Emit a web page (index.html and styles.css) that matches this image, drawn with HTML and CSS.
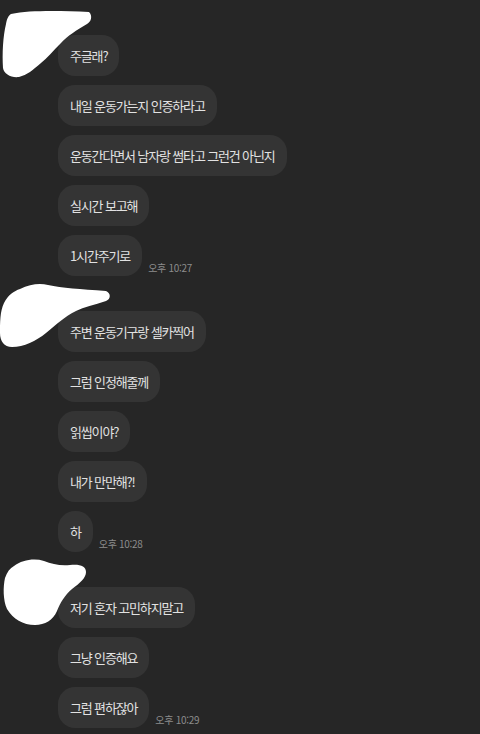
FILE: index.html
```html
<!DOCTYPE html>
<html lang="ko">
<head>
    <meta charset="UTF-8">
    <meta name="viewport" content="width=device-width, initial-scale=1.0">
    <title>채팅</title>
    <link rel="stylesheet" href="styles.css">
</head>
<body>
    <div class="chat">
        <div class="group first">
            <svg class="blot" width="100" height="80" viewBox="0 0 100 80">
                <path d="M10 8 C30 4 60 5 88 6 C92 10 90 16 86 18 C76 24 66 30 60 37 C52 45 46 52 40 57 C32 64 26 69 18 71 C10 72 3 68 2 62 C1 48 2 30 5 18 C6 12 8 9 10 8 Z" fill="#fff"/>
            </svg>
            <div class="row"><div class="bubble">주글래?</div></div>
            <div class="row"><div class="bubble">내일 운동가는지 인증하라고</div></div>
            <div class="row"><div class="bubble">운동간다면서 남자랑 썸타고 그런건 아닌지</div></div>
            <div class="row"><div class="bubble">실시간 보고해</div></div>
            <div class="row"><div class="bubble">1시간주기로</div><span class="time">오후 10:27</span></div>
        </div>
        <div class="group">
            <svg class="blot b2" width="120" height="70" viewBox="0 0 120 70">
                <path d="M20 10 C30 5 40 4 48 6 C62 9 80 10 106 12 C111 14 111 20 106 22 C94 26 84 28 76 32 C64 38 56 46 46 54 C36 62 24 68 12 68 C4 68 0 62 0 54 C0 44 0 32 4 24 C8 16 14 12 20 10 Z" fill="#fff"/>
            </svg>
            <div class="row"><div class="bubble">주변 운동기구랑 셀카찍어</div></div>
            <div class="row"><div class="bubble">그럼 인정해줄께</div></div>
            <div class="row"><div class="bubble">읽씹이야?</div></div>
            <div class="row"><div class="bubble">내가 만만해?!</div></div>
            <div class="row"><div class="bubble">하</div><span class="time">오후 10:28</span></div>
        </div>
        <div class="group">
            <svg class="blot b3" width="100" height="75" viewBox="0 0 100 75">
                <path d="M12 9 C20 3 32 1 42 4 C50 7 58 9 68 8 C78 7 84 9 84 15 C84 21 78 26 70 32 C63 38 58 46 55 54 C51 63 43 68 33 68 C21 68 11 62 5 52 C1 43 1 30 3 21 C5 15 8 11 12 9 Z" fill="#fff"/>
            </svg>
            <div class="row"><div class="bubble">저기 혼자 고민하지말고</div></div>
            <div class="row"><div class="bubble">그냥 인증해요</div></div>
            <div class="row"><div class="bubble">그럼 편하잖아</div><span class="time">오후 10:29</span></div>
        </div>
    </div>
</body>
</html>
```

FILE: styles.css
```css
body {
    margin: 0;
    background: #262626;
    font-family: "Noto Sans CJK KR", "Noto Sans", sans-serif;
    color: #e2e2e2;
    height: 734px;
    overflow: hidden;
}
.chat {
    padding: 35px 0 0 58px;
}
.group {
    position: relative;
    display: flex;
    flex-direction: column;
    gap: 9px;
    margin-top: 35px;
}
.group.first {
    margin-top: 0;
}
.row {
    display: flex;
    align-items: flex-end;
    gap: 6px;
}
.bubble {
    background: #343434;
    border-radius: 17px;
    height: 41px;
    box-sizing: border-box;
    padding: 0 12px;
    display: flex;
    align-items: center;
    font-size: 13px;
    letter-spacing: -1.15px;
    white-space: nowrap;
}
.time {
    font-size: 10px;
    letter-spacing: -0.3px;
    color: #8c8c8c;
    margin-bottom: 1px;
}
.blot {
    position: absolute;
    left: -57px;
    top: -29px;
}
.blot.b2 {
    left: -58px;
    top: -32px;
}
.blot.b3 {
    left: -56px;
    top: -30px;
}
```
